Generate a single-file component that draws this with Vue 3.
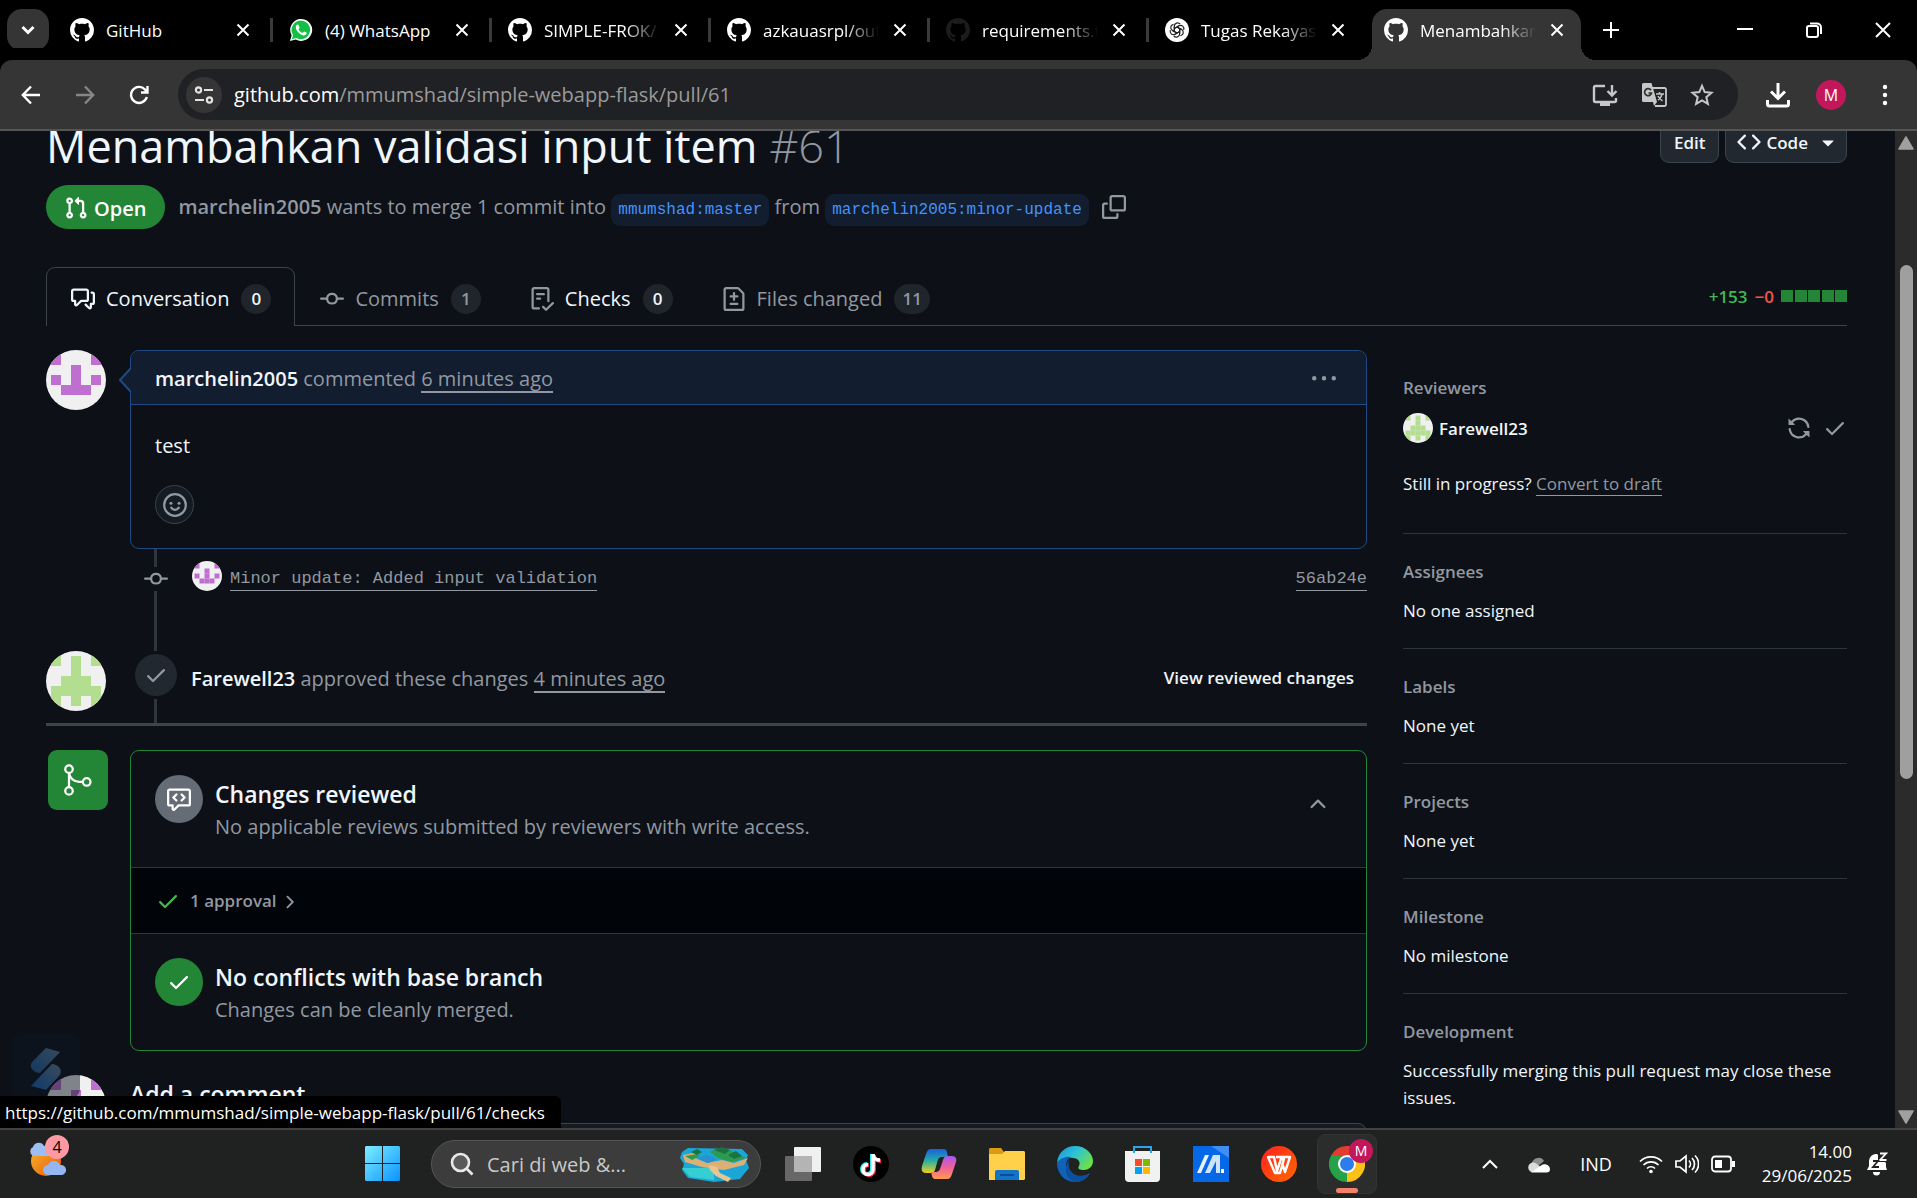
<script setup>
import { h } from 'vue'

const paths = {
  mark: 'M8 0c4.42 0 8 3.58 8 8a8.013 8.013 0 0 1-5.45 7.59c-.4.08-.55-.17-.55-.38 0-.27.01-1.13.01-2.2 0-.75-.25-1.23-.54-1.48 1.78-.2 3.65-.88 3.65-3.95 0-.88-.31-1.59-.82-2.15.08-.2.36-1.02-.08-2.12 0 0-.67-.22-2.2.82-.64-.18-1.32-.27-2-.27-.68 0-1.36.09-2 .27-1.53-1.03-2.2-.82-2.2-.82-.44 1.1-.16 1.92-.08 2.12-.51.56-.82 1.28-.82 2.15 0 3.06 1.86 3.75 3.64 3.95-.23.2-.44.55-.51 1.07-.46.21-1.61.55-2.33-.66-.15-.24-.6-.83-1.23-.82-.67.01-.27.38.01.53.34.19.73.9.82 1.13.16.45.68 1.31 2.69.94 0 .67.01 1.3.01 1.49 0 .21-.15.45-.55.38A7.995 7.995 0 0 1 0 8c0-4.42 3.58-8 8-8Z',
  pull: 'M1.5 3.25a2.25 2.25 0 1 1 3 2.122v5.256a2.251 2.251 0 1 1-1.5 0V5.372A2.25 2.25 0 0 1 1.5 3.25Zm5.677-.177L9.573.677A.25.25 0 0 1 10 .854V2.5h1A2.5 2.5 0 0 1 13.5 5v5.628a2.251 2.251 0 1 1-1.5 0V5a1 1 0 0 0-1-1h-1v1.646a.25.25 0 0 1-.427.177L7.177 3.427a.25.25 0 0 1 0-.354ZM3.75 2.5a.75.75 0 1 0 0 1.5.75.75 0 0 0 0-1.5Zm0 9.5a.75.75 0 1 0 0 1.5.75.75 0 0 0 0-1.5Zm8.25.75a.75.75 0 1 0 1.5 0 .75.75 0 0 0-1.5 0Z',
  talk: 'M1.75 1h8.5c.966 0 1.75.784 1.75 1.75v5.5A1.75 1.75 0 0 1 10.25 10H7.061l-2.574 2.573A1.458 1.458 0 0 1 2 11.543V10h-.25A1.75 1.75 0 0 1 0 8.25v-5.5C0 1.784.784 1 1.75 1ZM1.5 2.75v5.5c0 .138.112.25.25.25h1a.75.75 0 0 1 .75.75v2.19l2.72-2.72a.749.749 0 0 1 .53-.22h3.5a.25.25 0 0 0 .25-.25v-5.5a.25.25 0 0 0-.25-.25h-8.5a.25.25 0 0 0-.25.25Zm13 2a.25.25 0 0 0-.25-.25h-.5a.75.75 0 0 1 0-1.5h.5c.966 0 1.75.784 1.75 1.75v5.5A1.75 1.75 0 0 1 14.25 12H14v1.543a1.458 1.458 0 0 1-2.487 1.03L9.22 12.28a.749.749 0 0 1 .326-1.275.749.749 0 0 1 .734.215l2.22 2.22v-2.19a.75.75 0 0 1 .75-.75h1a.25.25 0 0 0 .25-.25Z',
  commit: 'M11.93 8.5a4.002 4.002 0 0 1-7.86 0H.75a.75.75 0 0 1 0-1.5h3.32a4.002 4.002 0 0 1 7.86 0h3.32a.75.75 0 0 1 0 1.5Zm-1.43-.75a2.5 2.5 0 1 0-5 0 2.5 2.5 0 0 0 5 0Z',
  checklist: 'M2.5 1.75v11.5c0 .138.112.25.25.25h3.17a.75.75 0 0 1 0 1.5H2.75A1.75 1.75 0 0 1 1 13.25V1.75C1 .784 1.784 0 2.75 0h8.5C12.216 0 13 .784 13 1.75v7.736a.75.75 0 0 1-1.5 0V1.75a.25.25 0 0 0-.25-.25h-8.5a.25.25 0 0 0-.25.25Zm13.274 9.537v-.001l-4.557 4.45a.75.75 0 0 1-1.055-.008l-1.943-1.95a.75.75 0 0 1 1.062-1.058l1.419 1.425 4.026-3.932a.75.75 0 1 1 1.048 1.074ZM4.75 4h4.5a.75.75 0 0 1 0 1.5h-4.5a.75.75 0 0 1 0-1.5ZM4 7.75A.75.75 0 0 1 4.75 7h2a.75.75 0 0 1 0 1.5h-2A.75.75 0 0 1 4 7.75Z',
  diff: 'M1 1.75C1 .784 1.784 0 2.75 0h7.586c.464 0 .909.184 1.237.513l2.914 2.914c.329.328.513.773.513 1.237v9.586A1.75 1.75 0 0 1 13.25 16H2.75A1.75 1.75 0 0 1 1 14.25Zm1.75-.25a.25.25 0 0 0-.25.25v12.5c0 .138.112.25.25.25h10.5a.25.25 0 0 0 .25-.25V4.664a.25.25 0 0 0-.073-.177l-2.914-2.914a.25.25 0 0 0-.177-.073ZM8 3.25a.75.75 0 0 1 .75.75v1.5h1.5a.75.75 0 0 1 0 1.5h-1.5v1.5a.75.75 0 0 1-1.5 0V7h-1.5a.75.75 0 0 1 0-1.5h1.5V4A.75.75 0 0 1 8 3.25Zm-3 8a.75.75 0 0 1 .75-.75h4.5a.75.75 0 0 1 0 1.5h-4.5a.75.75 0 0 1-.75-.75Z',
  copy: 'M0 6.75C0 5.784.784 5 1.75 5h1.5a.75.75 0 0 1 0 1.5h-1.5a.25.25 0 0 0-.25.25v7.5c0 .138.112.25.25.25h7.5a.25.25 0 0 0 .25-.25v-1.5a.75.75 0 0 1 1.5 0v1.5A1.75 1.75 0 0 1 9.25 16h-7.5A1.75 1.75 0 0 1 0 14.25ZM5 1.75C5 .784 5.784 0 6.75 0h7.5C15.216 0 16 .784 16 1.75v7.5A1.75 1.75 0 0 1 14.25 11h-7.5A1.75 1.75 0 0 1 5 9.25Zm1.75-.25a.25.25 0 0 0-.25.25v7.5c0 .138.112.25.25.25h7.5a.25.25 0 0 0 .25-.25v-7.5a.25.25 0 0 0-.25-.25Z',
  check: 'M13.78 4.22a.75.75 0 0 1 0 1.06l-7.25 7.25a.75.75 0 0 1-1.06 0L2.22 9.28a.751.751 0 0 1 .018-1.042.751.751 0 0 1 1.042-.018L6 10.94l6.72-6.72a.75.75 0 0 1 1.06 0Z',
  review: 'M1.75 1h12.5c.966 0 1.75.784 1.75 1.75v8.5A1.75 1.75 0 0 1 14.25 13H8.061l-2.574 2.573A1.458 1.458 0 0 1 3 14.543V13H1.75A1.75 1.75 0 0 1 0 11.25v-8.5C0 1.784.784 1 1.75 1ZM1.5 2.75v8.5c0 .138.112.25.25.25h2a.75.75 0 0 1 .75.75v2.19l2.72-2.72a.749.749 0 0 1 .53-.22h6.5a.25.25 0 0 0 .25-.25v-8.5a.25.25 0 0 0-.25-.25H1.75a.25.25 0 0 0-.25.25Zm5.28 1.72a.75.75 0 0 1 0 1.06L5.31 7l1.47 1.47a.751.751 0 0 1-.018 1.042.751.751 0 0 1-1.042.018l-2-2a.75.75 0 0 1 0-1.06l2-2a.75.75 0 0 1 1.06 0Zm2.44 0a.75.75 0 0 1 1.06 0l2 2a.75.75 0 0 1 0 1.06l-2 2a.751.751 0 0 1-1.042-.018.751.751 0 0 1-.018-1.042L10.69 7 9.22 5.53a.75.75 0 0 1 0-1.06Z',
  code: 'm11.28 3.22 4.25 4.25a.75.75 0 0 1 0 1.06l-4.25 4.25a.749.749 0 0 1-1.275-.326.749.749 0 0 1 .215-.734L13.94 8l-3.72-3.72a.749.749 0 0 1 .326-1.275.749.749 0 0 1 .734.215Zm-6.56 0a.751.751 0 0 1 1.042.018.751.751 0 0 1 .018 1.042L2.06 8l3.72 3.72a.749.749 0 0 1-.326 1.275.749.749 0 0 1-.734-.215L.47 8.53a.75.75 0 0 1 0-1.06Z',
  sync: 'M1.705 8.005a.75.75 0 0 1 .834.656 5.5 5.5 0 0 0 9.592 2.97l-1.204-1.204a.25.25 0 0 1 .177-.427h3.646a.25.25 0 0 1 .25.25v3.646a.25.25 0 0 1-.427.177l-1.38-1.38A7.002 7.002 0 0 1 1.05 8.84a.75.75 0 0 1 .656-.834ZM8 2.5a5.487 5.487 0 0 0-4.131 1.869l1.204 1.204A.25.25 0 0 1 4.896 6H1.25A.25.25 0 0 1 1 5.75V2.104a.25.25 0 0 1 .427-.177l1.38 1.38A7.002 7.002 0 0 1 14.95 7.16a.75.75 0 0 1-1.49.178A5.5 5.5 0 0 0 8 2.5Z',
  kebab: 'M8 9a1.5 1.5 0 1 0 0-3 1.5 1.5 0 0 0 0 3ZM1.5 9a1.5 1.5 0 1 0 0-3 1.5 1.5 0 0 0 0 3Zm13 0a1.5 1.5 0 1 0 0-3 1.5 1.5 0 0 0 0 3Z',
  caret: 'm4.427 7.427 3.396 3.396a.25.25 0 0 0 .354 0l3.396-3.396A.25.25 0 0 0 11.396 7H4.604a.25.25 0 0 0-.177.427Z',
  chevronRight: 'M6.22 3.22a.75.75 0 0 1 1.06 0l4.25 4.25a.75.75 0 0 1 0 1.06l-4.25 4.25a.751.751 0 0 1-1.042-.018.751.751 0 0 1-.018-1.042L9.94 8 6.22 4.28a.75.75 0 0 1 0-1.06Z',
  chevronUp: 'M3.22 10.53a.749.749 0 0 1 0-1.06l4.25-4.25a.749.749 0 0 1 1.06 0l4.25 4.25a.749.749 0 1 1-1.06 1.06L8 6.811 4.28 10.53a.749.749 0 0 1-1.06 0Z'
}

const Icon = (props) =>
  h('svg', { viewBox: '0 0 16 16', width: props.size, height: props.size, fill: 'currentColor', 'aria-hidden': 'true' },
    [h('path', { d: paths[props.name] })])
Icon.props = ['name', 'size']

/* Identicons: five by five cells on a light disc */
const people = {
  marchelin: { fill: '#bf6fcf', rows: ['10001', '00100', '10101', '01110', '00000'] },
  farewell: { fill: '#b4de8f', rows: ['10101', '00100', '01110', '11111', '10101'] }
}
const Avatar = (props) => {
  const p = people[props.who]
  const cells = []
  p.rows.forEach((r, y) => [...r].forEach((c, x) => {
    if (c === '1') cells.push(h('rect', { x: 5 + x * 10, y: 5 + y * 10, width: 10, height: 10, fill: p.fill }))
  }))
  return h('svg', { viewBox: '0 0 60 60', width: props.size, height: props.size, 'aria-hidden': 'true', style: { borderRadius: '50%' } },
    [h('rect', { width: 60, height: 60, fill: '#f0f0f0' }), ...cells])
}
Avatar.props = ['who', 'size']

const browserTabs = [
  { title: 'GitHub', icon: 'mark' },
  { title: '(4) WhatsApp', icon: 'whatsapp' },
  { title: 'SIMPLE-FROK/', icon: 'mark', fade: true },
  { title: 'azkauasrpl/out', icon: 'mark', fade: true },
  { title: 'requirements.t', icon: 'mark', fade: true, dim: true },
  { title: 'Tugas Rekayas', icon: 'gpt', fade: true },
  { title: 'Menambahkan', icon: 'mark', fade: true, active: true }
]
const prTabs = [
  { label: 'Conversation', icon: 'talk', count: 0, current: true, bright: true },
  { label: 'Commits', icon: 'commit', count: 1 },
  { label: 'Checks', icon: 'checklist', count: 0, bright: true },
  { label: 'Files changed', icon: 'diff', count: 11 }
]
const facts = [
  { name: 'Assignees', value: 'No one assigned' },
  { name: 'Labels', value: 'None yet' },
  { name: 'Projects', value: 'None yet' },
  { name: 'Milestone', value: 'No milestone' },
  { name: 'Development', value: 'Successfully merging this pull request may close these issues.' }
]
const petals = [0, 60, 120, 180, 240, 300]
</script>

<template>
  <div class="screen">
    <header class="strip">
      <button class="tab-search" aria-label="Search tabs">
        <svg width="14" height="10" viewBox="0 0 14 10" fill="none" stroke="#fff" stroke-width="3"><path d="M1.500 2l5.500 5.500L12.500 2" /></svg>
      </button>
      <div class="tabs">
        <div v-for="t in browserTabs" :key="t.title" class="tab" :class="{ active: t.active }">
          <svg v-if="t.icon === 'whatsapp'" width="24" height="24" viewBox="0 0 24 24">
            <path d="M1 23l1.600-5.700A11 11 0 1 1 6.800 21.500z" fill="#fff" />
            <path d="M2.900 21.200l1.100-4.200A9.300 9.300 0 1 1 7.200 20z" fill="#12c143" />
            <path d="M8.500 6.600c-.6 0-1.700 1-1.700 2.600 0 3.600 4.800 8.200 8.200 8.200 1.700 0 2.800-1.200 2.800-2.300 0-.5-.2-.6-2.600-1.700-.5-.2-1 1.400-1.600 1.400-1.200 0-4-2.600-4-3.600 0-.5 1-1 1-1.500 0-.4-.9-2.700-1.200-3-.2-.1-.5-.1-.9-.1z" fill="#fff" />
          </svg>
          <svg v-else-if="t.icon === 'gpt'" width="24" height="24" viewBox="0 0 24 24">
            <circle cx="12" cy="12" r="12" fill="#fff" />
            <g fill="none" stroke="#222" stroke-width="1.200">
              <path v-for="a in petals" :key="a" :transform="`rotate(${a} 12 12)`" d="M9.300 13.500V8.200a3.300 3.300 0 0 1 5.900-2M9.300 10.500l4.700-2.700" />
            </g>
          </svg>
          <Icon v-else :name="t.icon" :size="24" :class="{ dim: t.dim }" />
          <span class="tab-title" :class="{ fade: t.fade }">{{ t.title }}</span>
          <button class="plain" aria-label="Close tab">
            <svg width="14" height="14" viewBox="0 0 14 14" stroke="#fff" stroke-width="2"><path d="M1.500 1.500l11 11M12.500 1.500l-11 11" /></svg>
          </button>
        </div>
      </div>
      <button class="plain add" aria-label="New tab">
        <svg width="16" height="16" viewBox="0 0 16 16" stroke="#fff" stroke-width="2"><path d="M8 0v16M0 8h16" /></svg>
      </button>
      <div class="window-controls">
        <button class="plain" aria-label="Minimize"><svg width="16" height="16" viewBox="0 0 16 16" stroke="#fff" stroke-width="2"><path d="M0 7h16" /></svg></button>
        <button class="plain" aria-label="Restore"><svg width="16" height="16" viewBox="0 0 16 16" fill="none" stroke="#fff" stroke-width="2"><rect x="1" y="4" width="11" height="11" rx="2" /><path d="M4 1.500h7a4 4 0 0 1 4 4V12" /></svg></button>
        <button class="plain" aria-label="Close"><svg width="16" height="16" viewBox="0 0 16 16" stroke="#fff" stroke-width="2"><path d="M1 1l14 14M15 1L1 15" /></svg></button>
      </div>
    </header>

    <div class="toolbar">
      <button class="plain nav" aria-label="Back"><svg width="20" height="20" viewBox="0 0 20 20" fill="none" stroke="#fff" stroke-width="2.400"><path d="M19 10H2M10 1.500L1.800 10l8.200 8.500" /></svg></button>
      <button class="plain nav" aria-label="Forward"><svg width="20" height="20" viewBox="0 0 20 20" fill="none" stroke="#868686" stroke-width="2.400"><path d="M1 10h17M10 1.500l8.200 8.500-8.200 8.500" /></svg></button>
      <button class="plain nav" aria-label="Reload"><svg width="20" height="20" viewBox="0 0 20 20" fill="none" stroke="#fff" stroke-width="2.400"><path d="M17.800 12A8 8 0 1 1 16 4.500l2 2.500M18.500 1v6.500H12" /></svg></button>
      <div class="omnibox">
        <button class="site-info" aria-label="View site information">
          <svg width="20" height="20" viewBox="0 0 20 20" fill="none" stroke="#e3e3e3" stroke-width="2.200"><circle cx="4.500" cy="5" r="2.600" /><path d="M10 5h9M1 15h9" /><circle cx="15.500" cy="15" r="2.600" /></svg>
        </button>
        <label for="url">github.com</label>
        <input id="url" type="text" value="/mmumshad/simple-webapp-flask/pull/61">
        <div class="omni-icons">
          <button class="plain" aria-label="Install app"><svg width="26" height="24" viewBox="0 0 26 24" fill="none" stroke="#c7c7c7" stroke-width="2.400"><path d="M13 3H3.500A1.500 1.500 0 0 0 2 4.500v13A1.500 1.500 0 0 0 3.500 19h19a1.500 1.500 0 0 0 1.500-1.500V15M20 2v10M15.500 8l4.500 4.500L24.500 8" /><path d="M8 20h10v3H8z" fill="#c7c7c7" stroke="none" /></svg></button>
          <button class="plain" aria-label="Translate this page"><svg width="26" height="26" viewBox="0 0 26 26"><path d="M11 6h12.500A1.500 1.500 0 0 1 25 7.500v15a1.500 1.500 0 0 1-1.500 1.500H14" fill="none" stroke="#c7c7c7" stroke-width="1.800" /><path d="M2.500 1h8l5.500 19H2.500A1.500 1.500 0 0 1 1 18.500v-16A1.500 1.500 0 0 1 2.500 1z" fill="#c7c7c7" /><path d="M10 8.200A3.500 3.500 0 1 0 10.500 11H7.500" fill="none" stroke="#303134" stroke-width="1.700" /><path d="M15 12h8M18.500 10v2M21 12c-.5 3-2.500 5-4 6M17 14c1 2 3 4 4.500 5" fill="none" stroke="#c7c7c7" stroke-width="1.500" /><path d="M12 20h4l-3 4z" fill="#c7c7c7" /></svg></button>
          <button class="plain" aria-label="Bookmark this tab"><svg width="24" height="24" viewBox="0 0 24 24" fill="none" stroke="#c7c7c7" stroke-width="2"><path d="M12 2.800l2.700 6.300 6.800.6-5.200 4.500 1.600 6.700L12 17.300l-5.900 3.600 1.600-6.700L2.500 9.700l6.800-.6z" /></svg></button>
        </div>
      </div>
      <div class="tool-icons">
        <button class="plain" aria-label="Downloads"><svg width="24" height="26" viewBox="0 0 24 26" fill="none" stroke="#fff" stroke-width="3"><path d="M12 1v15M5 9.500l7 7 7-7M1.500 18v4a2 2 0 0 0 2 2h17a2 2 0 0 0 2-2v-4" /></svg></button>
        <button class="profile" aria-label="Profile">M</button>
        <button class="plain" aria-label="Menu"><svg width="6" height="22" viewBox="0 0 6 22" fill="#fff"><circle cx="3" cy="3" r="2.200" /><circle cx="3" cy="11" r="2.200" /><circle cx="3" cy="19" r="2.200" /></svg></button>
      </div>
    </div>

    <div class="viewport">
      <div class="page">
        <div class="title-row">
          <h1>Menambahkan validasi input item <span>#61</span></h1>
          <div class="actions">
            <button class="btn">Edit</button>
            <button class="btn code"><Icon name="code" :size="24" />Code<Icon name="caret" :size="24" class="end" /></button>
          </div>
        </div>

        <div class="meta">
          <span class="state"><Icon name="pull" :size="24" />Open</span>
          <p class="summary">
            <a href="#" class="who">marchelin2005</a> wants to merge 1 commit into
            <a href="#" class="branch">mmumshad:master</a> from
            <a href="#" class="branch">marchelin2005:minor-update</a>
          </p>
          <button class="plain muted copy" aria-label="Copy branch name"><Icon name="copy" :size="24" /></button>
        </div>

        <nav class="pr-tabs">
          <a v-for="t in prTabs" :key="t.label" href="#" class="pr-tab" :class="{ current: t.current, bright: t.bright }">
            <Icon :name="t.icon" :size="24" class="tab-icon" />{{ t.label }}<span class="count">{{ t.count }}</span>
          </a>
          <div class="diffstat">
            <span class="plus">+153</span><span class="minus">−0</span>
            <span class="blocks"><i v-for="n in 5" :key="n"></i></span>
          </div>
        </nav>

        <div class="columns">
          <main>
            <section class="entry">
              <Avatar who="marchelin" :size="60" />
              <article class="comment">
                <svg class="beak" width="12" height="24" viewBox="0 0 12 24"><path d="M12 0L1 12l11 12" fill="#121d2f" stroke="#1f4a85" stroke-width="2" /></svg>
                <header>
                  <span><a href="#" class="name">marchelin2005</a> commented <a href="#" class="when">6 minutes ago</a></span>
                  <button class="plain muted" aria-label="Show options"><Icon name="kebab" :size="24" /></button>
                </header>
                <div class="body">
                  <p>test</p>
                  <button class="react" aria-label="Add reaction">
                    <svg width="24" height="24" viewBox="0 0 16 16" fill="none" stroke="#9198a1" stroke-width="1.500"><circle cx="8" cy="8" r="7.200" /><path d="M5.500 9.800c1.200 1.900 3.800 1.900 5 0" stroke-linecap="round" /><circle cx="5.300" cy="6.800" r="1" fill="#9198a1" stroke="none" /><circle cx="10.700" cy="6.800" r="1" fill="#9198a1" stroke="none" /></svg>
                  </button>
                </div>
              </article>
            </section>

            <section class="commit-row">
              <div class="rail"><i class="line short"></i><Icon name="commit" :size="24" /><i class="line"></i></div>
              <div class="commit">
                <Avatar who="marchelin" :size="30" />
                <a href="#" class="mono">Minor update: Added input validation</a>
                <a href="#" class="mono hash">56ab24e</a>
              </div>
            </section>

            <section class="approve-row">
              <Avatar who="farewell" :size="60" />
              <div class="rail"><span class="dot"><Icon name="check" :size="24" /></span><i class="line"></i></div>
              <p><a href="#" class="name">Farewell23</a> approved these changes <a href="#" class="when">4 minutes ago</a></p>
              <a href="#" class="view">View reviewed changes</a>
            </section>

            <section class="entry merge">
              <span class="merge-mark">
                <svg width="36" height="36" viewBox="0 0 24 24" fill="none" stroke="#fff" stroke-width="1.500"><circle cx="6" cy="4.750" r="2.500" /><circle cx="6" cy="19.250" r="2.500" /><circle cx="17.800" cy="13.300" r="2.500" /><path d="M6 7.300v9.400M6 7.300c.4 3.600 3.400 6 7 6h2.200" /></svg>
              </span>
              <div class="merge-box">
                <div class="check-row">
                  <span class="badge grey"><Icon name="review" :size="24" /></span>
                  <div>
                    <h3>Changes reviewed</h3>
                    <p>No applicable reviews submitted by reviewers with write access.</p>
                  </div>
                  <button class="plain muted fold" aria-label="Collapse reviews"><Icon name="chevronUp" :size="24" /></button>
                </div>
                <button class="approval"><Icon name="check" :size="24" class="ok" />1 approval<Icon name="chevronRight" :size="20" class="next" /></button>
                <div class="check-row">
                  <span class="badge green"><Icon name="check" :size="24" /></span>
                  <div>
                    <h3>No conflicts with base branch</h3>
                    <p>Changes can be cleanly merged.</p>
                  </div>
                </div>
              </div>
            </section>

            <section class="entry composer">
              <Avatar who="marchelin" :size="60" />
              <div class="form">
                <h3>Add a comment</h3>
                <div class="editor"></div>
              </div>
            </section>
          </main>

          <aside>
            <section class="reviewers">
              <h2>Reviewers</h2>
              <div class="reviewer">
                <Avatar who="farewell" :size="30" />
                <a href="#">Farewell23</a>
                <button class="plain muted" aria-label="Re-request review"><Icon name="sync" :size="24" /></button>
                <Icon name="check" :size="24" class="muted" />
              </div>
              <p>Still in progress? <a href="#">Convert to draft</a></p>
            </section>
            <section v-for="f in facts" :key="f.name">
              <h2>{{ f.name }}</h2>
              <p>{{ f.value }}</p>
            </section>
          </aside>
        </div>
      </div>

      <div class="scrollbar">
        <svg width="16" height="14" viewBox="0 0 16 14" fill="#a0a0a0"><path d="M8 1l7 12H1z" stroke="#a0a0a0" stroke-width="1.500" stroke-linejoin="round" /></svg>
        <i class="thumb"></i>
        <svg width="16" height="14" viewBox="0 0 16 14" fill="#a0a0a0"><path d="M8 13l7-12H1z" stroke="#a0a0a0" stroke-width="1.500" stroke-linejoin="round" /></svg>
      </div>

      <div class="floater">
        <svg width="32" height="42" viewBox="0 0 32 42">
          <defs>
            <linearGradient id="fa" x1="0" y1="1" x2="1" y2="0"><stop offset="0" stop-color="#12385f" /><stop offset="1" stop-color="#364a5e" /></linearGradient>
            <linearGradient id="fb" x1="0" y1="1" x2="1" y2="0"><stop offset="0" stop-color="#0f3a6c" /><stop offset="1" stop-color="#3a4a5a" /></linearGradient>
          </defs>
          <path d="M16 0l14 4-20 21C2 24-2 18 3 13z" fill="url(#fa)" />
          <path d="M16 42L1 38l21-22c8 1 11 7 7 12z" fill="url(#fb)" />
        </svg>
      </div>
      <div class="status">https://github.com/mmumshad/simple-webapp-flask/pull/61/checks</div>
    </div>

    <footer class="taskbar">
      <div class="weather">
        <svg width="44" height="44" viewBox="0 0 44 44">
          <defs><linearGradient id="sun" x1="0" y1="0" x2="1" y2="1"><stop offset="0" stop-color="#f5b52c" /><stop offset="1" stop-color="#e8590c" /></linearGradient></defs>
          <circle cx="18" cy="22" r="15" fill="url(#sun)" />
          <path d="M5 17a5 5 0 0 1 0-9 6 6 0 0 1 11-1 5 5 0 0 1 5 10z" fill="#9dbdf5" />
          <path d="M20 36a5 5 0 0 1 0-10 6.500 6.500 0 0 1 12 0 5 5 0 0 1 2 10z" fill="#94b6f2" />
        </svg>
        <span>4</span>
      </div>
      <div class="dock">
        <button class="plain" aria-label="Start">
          <svg width="36" height="36" viewBox="0 0 36 36">
            <defs><linearGradient id="win" x1="0" y1="0" x2="1" y2="1"><stop offset="0" stop-color="#7eeeff" /><stop offset="1" stop-color="#0a93ff" /></linearGradient></defs>
            <path d="M1 0h16v17H0V1zM18 0h16l1 1v16H18zM0 18h17v17H1l-1-1zM18 18h17v16l-1 1H18z" fill="url(#win)" />
          </svg>
        </button>
        <div class="search">
          <svg width="24" height="24" viewBox="0 0 24 24" fill="#5a5a5a" stroke="#e8e8e8" stroke-width="2.600"><circle cx="10.500" cy="10.500" r="8.500" /><path d="M16.500 16.500l6 6" /></svg>
          <input type="text" placeholder="Cari di web &..." aria-label="Cari di web">
          <svg width="70" height="36" viewBox="0 0 70 36">
            <path d="M8 2l54 1 6 6-2 5 3 8-5 6-4 5-26 3-26-4-6-8 2-6-4-6 2-6z" fill="#1aa7d8" />
            <path d="M2 22h32v12L10 31z" fill="#35cfd3" /><path d="M3 9l16-3-4 6 12 5 15-3 12 3 14-5-4 7-20 5-10-1-12-2-17-5z" fill="#dcb075" />
            <path d="M5 10l12-2 3 2-8 4zM30 6c7-5 20-4 26 2l10 4-14 4-14-4z" fill="#2b9b50" /><path d="M34 4l8-3 8 3-5 4zM48 9l8-4 6 5-8 3zM11 6l6-3 5 3-5 3z" fill="#1b7440" />
            <path d="M17 12l10-3 10 4-9 4z" fill="#2c8fd0" /><path d="M29 19l8 2 3 6 11 5-3 4-12-6-6-6z" fill="#e7c490" />
          </svg>
        </div>
        <button class="plain" aria-label="Task view"><svg width="36" height="36" viewBox="0 0 36 36"><rect x="9" y="1" width="27" height="25" rx="1" fill="#f0f0f0" /><rect x="0" y="10" width="27" height="25" rx="1" fill="#6f6f6f" opacity=".9" /><path d="M9 10h18v16H9z" fill="#b4b4b4" /></svg></button>
        <button class="plain" aria-label="TikTok"><svg width="36" height="36" viewBox="0 0 36 36" fill="none"><circle cx="18" cy="18" r="18" fill="#000" /><path d="M19 8v15a5 5 0 1 1-5-5" stroke="#25f4ee" stroke-width="4" /><path d="M21 9v15a5 5 0 1 1-5-5M21 9c0 4 3 6 7 6" stroke="#fe2c55" stroke-width="4" /><path d="M20 8v15.500a5 5 0 1 1-5-5M20 8c0 4 3 6 7 6" stroke="#fff" stroke-width="3.600" /></svg></button>
        <button class="plain" aria-label="Copilot">
          <svg width="36" height="36" viewBox="0 0 36 36">
            <defs>
              <linearGradient id="ca" x1="0" y1="0" x2="0" y2="1"><stop offset="0" stop-color="#1a5fe0" /><stop offset=".5" stop-color="#27b0a0" /><stop offset="1" stop-color="#f0d020" /></linearGradient>
              <linearGradient id="cb" x1="0" y1="0" x2="0" y2="1"><stop offset="0" stop-color="#a558f0" /><stop offset=".5" stop-color="#f0609a" /><stop offset="1" stop-color="#ff9a50" /></linearGradient>
            </defs>
            <path d="M10 3h13c3 0 3 3 4 8h-6c-3 0-4 2-5 6l-2 7c-1 3-3 3-5 3H5c-4 0-5-3-4-7l4-12c1-3 2-5 5-5z" fill="url(#ca)" />
            <path d="M26 33H14c-3 0-3-4-4-7h5c3 0 4-3 5-6l2-6c1-3 2-4 5-4h4c4 0 5 3 4 6l-4 12c-1 3-2 5-5 5z" fill="url(#cb)" />
          </svg>
        </button>
        <button class="plain" aria-label="File Explorer"><svg width="36" height="36" viewBox="0 0 36 36"><path d="M0 3l1-1h11l3 4v5H0z" fill="#dc9a10" /><path d="M0 8h13l3-3h19l1 1v27l-1 1H0z" fill="#ffd04a" /><path d="M6 34V26a2 2 0 0 1 2-2h20a2 2 0 0 1 2 2v8z" fill="#1273c8" /><path d="M11 29h14" stroke="#0a4d92" stroke-width="2" /></svg></button>
        <button class="plain" aria-label="Edge">
          <svg width="36" height="36" viewBox="0 0 36 36">
            <defs><linearGradient id="ea" x1="0" y1="0" x2="1" y2=".6"><stop offset="0" stop-color="#1c8fdc" /><stop offset=".5" stop-color="#2cc3d6" /><stop offset="1" stop-color="#6be04a" /></linearGradient></defs>
            <path d="M0 17C1 6 9 0 18 0c11 0 18 8 18 15 0 6-5 9-9 9-4 0-7-1-5-4 2-4-1-8-6-8C9 11 3 13 0 17z" fill="url(#ea)" />
            <path d="M0 17c3-5 9-7 14-6-4 2-6 7-4 12 3 8 14 11 23 4-3 6-9 9-15 9C8 36 0 28 0 17z" fill="#0f62b8" /><path d="M14 12c-4 4-3 12 3 16 5 3 11 2 16-1-3 6-9 9-15 9C9 34 5 20 14 12z" fill="#0c4f9c" />
          </svg>
        </button>
        <button class="plain" aria-label="Microsoft Store"><svg width="36" height="36" viewBox="0 0 36 36"><path d="M0 5h35v27a4 4 0 0 1-4 4H4a4 4 0 0 1-4-4z" fill="#f1f1f1" /><path d="M9 7V1h17v6" fill="none" stroke="#29a5e8" stroke-width="2" /><path d="M10 13h7v7h-7z" fill="#f25022" /><path d="M18 13h7v7h-7z" fill="#7fba00" /><path d="M10 21h7v7h-7z" fill="#00a4ef" /><path d="M18 21h7v7h-7z" fill="#ffb900" /></svg></button>
        <button class="plain" aria-label="MyASUS"><svg width="36" height="36" viewBox="0 0 36 36"><path d="M0 0h36v36H0z" fill="#0568e6" /><path d="M18 0h18v12z" fill="#3d8ff5" /><path d="M12 9h4L8 27H4z" fill="#e6f1ff" /><path d="M20 9h7v18h-4V15l-6 12h-5z" fill="#cfe3ff" /><path d="M28 23h3v4h-3z" fill="#fff" /></svg></button>
        <button class="plain" aria-label="WPS Office"><svg width="36" height="36" viewBox="0 0 36 36"><defs><linearGradient id="wps" x1="0" y1="0" x2="1" y2="1"><stop offset="0" stop-color="#ff1f1f" /><stop offset="1" stop-color="#ff6a00" /></linearGradient></defs><circle cx="18" cy="18" r="18" fill="url(#wps)" /><path d="M7 11h6l3 14 4-12h3l-4 14h-5zM15 11h14l-5 15-3-9" fill="none" stroke="#fff" stroke-width="2.400" stroke-linejoin="round" /></svg></button>
        <button class="plain chrome" aria-label="Chrome">
          <svg width="36" height="36" viewBox="0 0 36 36"><path d="M18 18L2.400 9a18 18 0 0 1 31.200 0z" fill="#e33b2e" /><path d="M18 18l15.600-9A18 18 0 0 1 18 36z" fill="#fbc116" /><path d="M18 18V36A18 18 0 0 1 2.400 9z" fill="#26a148" /><path d="M18 9h15.600L25 22z" fill="#fbc116" /><path d="M18 36l8-14H18z" fill="#fbc116" /><path d="M2.400 9l8 13.500 4-12z" fill="#26a148" /><circle cx="18" cy="18" r="9" fill="#fff" /><circle cx="18" cy="18" r="7" fill="#2c7de9" /></svg>
          <span class="chrome-badge">M</span>
          <i class="running"></i>
        </button>
      </div>
      <div class="tray">
        <button class="plain" aria-label="Show hidden icons"><svg width="18" height="12" viewBox="0 0 18 12" fill="none" stroke="#fff" stroke-width="2"><path d="M2 10l7-7 7 7" /></svg></button>
        <svg width="24" height="18" viewBox="0 0 24 18"><path d="M6 10a6.500 6.500 0 0 1 12-4l-7 6z" fill="#8f8f8f" /><path d="M5 17a5 5 0 0 1 0-9c3-1 5 0 7 2l9 7z" fill="#dcdcdc" /><path d="M5 17.500l10-7c4-3 9 0 9 3.500a3.500 3.500 0 0 1-3.500 3.500z" fill="#fff" /></svg>
        <span class="lang">IND</span>
        <div class="net">
          <svg width="24" height="20" viewBox="0 0 24 20" fill="none" stroke="#fff" stroke-width="1.700"><path d="M1 7.500a15.500 15.500 0 0 1 22 0M4.500 11a10.500 10.500 0 0 1 15 0M8 14.500a5.500 5.500 0 0 1 8 0" /><circle cx="12" cy="17.500" r="1.800" fill="#fff" stroke="none" /></svg>
          <svg width="24" height="20" viewBox="0 0 24 20" fill="none" stroke="#fff" stroke-width="1.700"><path d="M1 7h4l6-5v16l-6-5H1zM14 6.500a5 5 0 0 1 0 7M17 4a8.500 8.500 0 0 1 0 12M20 1.500a12 12 0 0 1 0 17" /></svg>
          <svg width="24" height="18" viewBox="0 0 24 18" fill="none" stroke="#fff" stroke-width="1.800"><rect x="1" y="1.500" width="19" height="15" rx="3" /><path d="M22.500 6v6" stroke-width="3" /><path d="M4 5h7v8H4z" fill="#fff" stroke="none" /></svg>
        </div>
        <div class="clock"><span>14.00</span><span>29/06/2025</span></div>
        <svg width="22" height="24" viewBox="0 0 22 24"><path d="M1 18l2-4V9a7 7 0 0 1 8-7l9 9v4l1 3zM7 20h7a3.500 3.500 0 0 1-7 0z" fill="#fff" /><path d="M12 1h9v9h-9z" fill="#202121" /><path d="M14 1.500h6l-6 6.500h6.500" fill="none" stroke="#fff" stroke-width="1.800" /><path d="M7 9h5l-5 6h6" fill="none" stroke="#202121" stroke-width="1.800" /></svg>
      </div>
    </footer>
  </div>
</template>

<style>
body { background: #0d1117; }
</style>

<style scoped>
* { box-sizing: border-box; }
svg { display: block; flex: none; }
.screen { display: flex; flex-direction: column; height: 100vh; overflow: hidden; background: #0d1117; color: #f0f6fc; font-family: "Open Sans", "Noto Sans", sans-serif; font-size: 20px; }
button, input { font: inherit; color: inherit; }
.plain { display: flex; align-items: center; justify-content: center; padding: 0; border: 0; background: none; }
a { color: inherit; text-decoration: none; }
h1, h2, h3, p { margin: 0; }
.muted { color: #9198a1; }

/* Browser tabs */
.strip { display: flex; align-items: center; height: 60px; flex: none; background: #000; padding-left: 7px; color: #fff; font-size: 17px; }
.tab-search { display: flex; align-items: center; justify-content: center; width: 42px; height: 42px; padding: 0; border: 0; border-radius: 15px; background: #353535; }
.tabs { display: flex; align-self: stretch; padding: 9px 0 0 9px; }
.tab { position: relative; display: flex; align-items: center; width: 209px; margin-right: 10px; padding: 0 17px 9px 12px; }
.tab .plain { margin-left: auto; }
.tab:not(.active):not(:nth-last-child(2))::after { content: ""; position: absolute; right: -6px; top: 9px; width: 3px; height: 24px; background: #3a3a3a; }
.tab-title { width: 116px; margin-left: 12px; padding-top: 2px; overflow: hidden; white-space: nowrap; line-height: 24px; }
.tab-title.fade { -webkit-mask-image: linear-gradient(90deg, #000 70%, transparent); mask-image: linear-gradient(90deg, #000 70%, transparent); }
.dim { color: #1c1c1c; }
.tab.active { background: #353535; border-radius: 15px 15px 0 0; }
.tab.active::before, .tab.active::after { content: ""; position: absolute; bottom: 0; width: 15px; height: 15px; }
.tab.active::before { left: -15px; background: radial-gradient(circle at 0 0, transparent 15px, #353535 15px); }
.tab.active::after { right: -15px; background: radial-gradient(circle at 100% 0, transparent 15px, #353535 15px); }
.add { margin-left: 12px; }
.window-controls { display: flex; gap: 53px; margin-left: auto; padding-right: 26px; }

/* Browser toolbar */
.toolbar { display: flex; align-items: center; height: 71px; flex: none; padding: 0 29px 0 21px; background: #353535; border-bottom: 2px solid #555; border-radius: 12px 12px 0 0; box-shadow: 0 -12px 0 #000; }
.nav { width: 20px; margin-right: 34px; }
.omnibox { display: flex; align-items: center; flex: 1; height: 51px; margin-left: -5px; padding: 0 24px 0 8px; border-radius: 26px; background: #202124; color: #fff; }
.site-info { display: flex; align-items: center; justify-content: center; width: 36px; height: 36px; margin-right: 12px; padding: 0; border: 0; border-radius: 50%; background: #353535; }
.omnibox input { flex: 1; padding: 0; border: 0; outline: 0; background: none; color: #9a9a9a; }
.omni-icons { display: flex; align-items: center; gap: 23px; }
.tool-icons { display: flex; align-items: center; margin-left: 28px; }
.profile { width: 30px; height: 30px; margin: 0 36px 0 26px; padding: 0; border: 0; border-radius: 50%; background: #c2185b; color: #fff; font-size: 16px; }

/* Page */
.viewport { position: relative; display: flex; flex: 1; min-height: 0; overflow: hidden; }
.page { flex: 1; padding: 0 48px 0 46px; }
.title-row { display: flex; justify-content: space-between; align-items: flex-start; height: 54px; margin-top: -12px; }
h1 { font-size: 45px; font-weight: 400; line-height: 54px; white-space: nowrap; }
h1 span { color: #9198a1; font-weight: 300; }
.actions { display: flex; gap: 6px; padding-top: 2px; }
.btn { display: flex; align-items: center; height: 42px; padding: 0 13px; border: 1px solid #3d444d; border-radius: 9px; background: #212830; font-size: 17px; font-weight: 600; }
.btn.code { gap: 5px; padding: 0 6px 0 11px; }
.end { margin-left: 3px; }
.meta { display: flex; align-items: center; height: 44px; margin-top: 12px; color: #9198a1; }
.state { display: flex; align-items: center; gap: 6px; height: 44px; padding: 2px 19px 0 18px; border-radius: 22px; background: #238636; color: #fff; font-weight: 600; }
.summary { margin-left: 13px; padding-top: 2px; line-height: 32px; }
.who { font-weight: 600; }
.branch { display: inline-block; padding: 0 7px; border-radius: 9px; background: #121d2f; color: #4493f8; font: 16px/32px "Liberation Mono", monospace; }
.copy { margin-left: 13px; }

.pr-tabs { display: flex; height: 59px; margin-top: 38px; border-bottom: 1px solid #3d444d; color: #9198a1; }
.pr-tab { display: flex; align-items: center; height: 59px; padding: 3px 23px 0 24px; border: 1px solid transparent; border-bottom: 0; border-radius: 9px 9px 0 0; }
.pr-tab.bright { color: #f0f6fc; }
.pr-tab.current { border-color: #3d444d; background: #0d1117; }
.tab-icon { margin-right: 11px; color: #9198a1; }
.current .tab-icon { color: #f0f6fc; }
.count { min-width: 30px; height: 30px; margin-left: 12px; padding: 0 8px; border-radius: 15px; background: #20252c; font-size: 17px; font-weight: 600; line-height: 30px; text-align: center; }
.diffstat { display: flex; align-items: center; gap: 7px; margin-left: auto; font-size: 17px; font-weight: 600; }
.plus { color: #3fb950; }
.minus { color: #f85149; }
.blocks { display: flex; justify-content: space-between; width: 66px; }
.blocks i { width: 12px; height: 12px; background: #238636; }

.columns { display: grid; grid-template-columns: minmax(0, 1fr) 444px; gap: 36px; margin-top: 24px; }
.entry { display: flex; gap: 24px; align-items: flex-start; }
.comment { position: relative; flex: 1; border: 1px solid #1f4a85; border-radius: 9px; background: #0d1117; }
.beak { position: absolute; left: -12px; top: 17px; }
.comment header { display: flex; align-items: center; justify-content: space-between; height: 54px; padding: 2px 30px 0 24px; border-bottom: 1px solid #1f4a85; border-radius: 9px 9px 0 0; background: #121d2f; color: #9198a1; }
.name { color: #f0f6fc; font-weight: 600; }
.when { border-bottom: 2px solid #9198a1; line-height: 24px; display: inline-block; }
.body { padding: 25px 24px 24px; line-height: 32px; }
.react { display: flex; align-items: center; justify-content: center; width: 39px; height: 39px; margin-top: 23px; padding: 0; border: 1px solid #3d444d; border-radius: 50%; background: #151b23; }

.rail { display: flex; flex-direction: column; align-items: center; width: 42px; color: #9198a1; }
.line { flex: 1; width: 3px; margin-right: 1px; background: #2f353d; }
.commit-row { display: flex; height: 102px; margin-left: 89px; }
.line.short { flex: none; height: 18px; }
.commit { display: flex; align-items: center; flex: 1; height: 30px; margin: 12px 0 0 15px; color: #9198a1; }
.mono { margin-left: 8px; padding-top: 6px; border-bottom: 1px solid #9198a1; font: 17px/22px "Liberation Mono", monospace; }
.commit .hash { margin-left: auto; }
.approve-row { display: flex; height: 75px; border-bottom: 3px solid #3d444d; color: #9198a1; line-height: 56px; }
.approve-row .rail { margin-left: 29px; padding-top: 3px; }
.dot { display: flex; align-items: center; justify-content: center; width: 42px; height: 42px; margin-bottom: 3px; border-radius: 50%; background: #212830; }
.approve-row p { margin-left: 14px; }
.view { margin-left: auto; padding-right: 13px; color: #f0f6fc; font-size: 17px; font-weight: 600; line-height: 54px; }

.merge { gap: 22px; margin-top: 24px; }
.merge-mark { display: flex; align-items: center; justify-content: center; width: 60px; height: 60px; margin-left: 2px; border-radius: 9px; background: #238636; }
.merge-box { flex: 1; overflow: hidden; border: 1px solid #238636; border-radius: 9px; }
.check-row { display: flex; height: 116px; padding: 24px; }
.check-row > div { padding: 4px 0 0 12px; }
h3 { font-size: 23px; font-weight: 600; line-height: 30px; }
.check-row p { color: #9198a1; line-height: 36px; }
.badge { display: flex; align-items: center; justify-content: center; width: 48px; height: 48px; border-radius: 50%; color: #fff; }
.grey { background: #656c76; }
.green { background: #238636; }
.fold { height: 58px; margin-left: auto; padding-right: 12px; }
.approval { display: flex; align-items: center; width: 100%; height: 67px; padding: 0 24px 0 25px; border: solid #2f353d; border-width: 1px 0; background: #010409; color: #9198a1; font-size: 17px; font-weight: 600; }
.ok { margin-right: 10px; color: #3fb950; }
.next { margin: 2px 0 0 2px; }
.composer { margin-top: 24px; }
.form { flex: 1; padding-top: 4px; }
.editor { height: 180px; margin-top: 14px; border: 1px solid #3d444d; border-radius: 9px; background: #151b23; }

/* Sidebar */
aside { font-size: 17px; line-height: 27px; }
aside section { padding: 24px 0; border-top: 1px solid #2f353d; }
aside .reviewers { padding-bottom: 36px; border-top: 0; }
h2 { margin-bottom: 12px; color: #9198a1; font-size: 17px; font-weight: 600; line-height: 27px; }
.reviewer { display: flex; align-items: center; height: 30px; margin-bottom: 27px; }
.reviewer a { margin: 0 auto 0 6px; font-weight: 600; }
.reviewer .plain { margin-right: 12px; }
.reviewers p a { display: inline-block; border-bottom: 1px solid #9198a1; color: #9198a1; line-height: 22px; }

/* Overlays of the viewport */
.scrollbar { display: flex; flex-direction: column; align-items: center; flex: none; width: 22px; padding: 5px 0 4px; background: #2b2b2b; }
.thumb { width: 13px; height: 52%; margin: 115px 0 auto; border-radius: 7px; background: #9f9f9f; }
.floater { position: absolute; left: 12px; bottom: 30px; width: 68px; height: 64px; padding: 14px 18px; background: rgba(13, 22, 36, .5); border-radius: 9px; }
.status { position: absolute; left: 0; bottom: 0; height: 32px; padding: 0 16px 0 5px; border-radius: 0 6px 0 0; background: #000; color: #fff; font-size: 17px; line-height: 33px; }

/* Taskbar */
.taskbar { display: flex; align-items: center; justify-content: space-between; height: 70px; flex: none; padding: 0 29px 0 28px; border-top: 2px solid #434343; background: #202121; color: #fff; }
.weather { position: relative; width: 44px; }
.weather span { position: absolute; left: 17px; top: -4px; width: 24px; height: 24px; border-radius: 50%; background: #ff99a4; color: #000; font-size: 16px; line-height: 24px; text-align: center; }
.weather { margin-bottom: 6px; }
.dock { display: flex; align-items: center; gap: 32px; margin-left: 293px; }
.search { display: flex; align-items: center; width: 330px; height: 48px; margin: 0 -8px 0 -2px; padding: 0 10px 0 18px; border: 1px solid #555; border-radius: 24px; background: #3c3c3c; }
.search input { flex: 1; min-width: 0; margin-left: 13px; padding: 0; border: 0; outline: 0; background: none; }
.search input::placeholder { color: #c8c8c8; opacity: 1; }
.chrome { position: relative; width: 60px; height: 60px; margin-left: -12px; border: 1px solid #333; border-radius: 8px; background: #2b2c2c; }
.chrome-badge { position: absolute; right: 3px; top: 4px; width: 24px; height: 24px; border-radius: 50%; background: #c2185b; color: #fff; font-size: 14px; line-height: 24px; }
.running { position: absolute; left: 18px; bottom: 0; width: 22px; height: 5px; border-radius: 3px; background: #f4826a; }
.tray { display: flex; align-items: center; gap: 27px; margin-left: auto; }
.lang { margin-left: 3px; font-size: 18px; }
.net { display: flex; align-items: center; gap: 12px; }
.clock { display: flex; flex-direction: column; margin-right: -13px; text-align: right; font-size: 17px; line-height: 24px; }
</style>
